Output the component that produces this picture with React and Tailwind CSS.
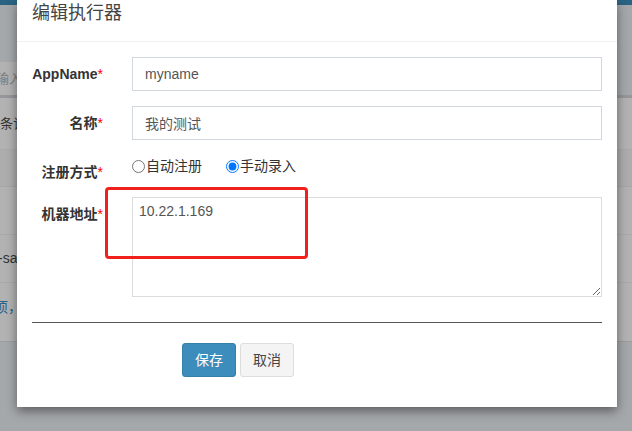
import React from 'react';

const font = { fontFamily: '"Liberation Sans", "Noto Sans CJK SC", sans-serif' };

const Req = () => <span className="text-[#ff0000] font-normal">*</span>;

const FormRow = ({ label, className = '', labelClass = 'pt-[7px]', children }) => (
    <div className={`flex ${className}`}>
        <label className={`w-[71px] shrink-0 text-right text-[14px] leading-[20px] font-bold text-[#333] whitespace-nowrap ${labelClass}`}>
            {label}
            <Req />
        </label>
        <div className="ml-[29px] flex-1">{children}</div>
    </div>
);

const Background = () => (
    <div className="flex flex-col w-full h-[431px] bg-[#a5a8ab] text-[13px]" style={font}>
        <div className="h-[5px] bg-[#2a6383]" />
        <div className="h-[57px]" />
        <div className="h-[33px] flex items-center">
            <div className="w-[220px] h-full bg-[#b2b2b2] flex items-center">
                <span className="-ml-[4px] text-[#7a7a7a]">输入</span>
            </div>
        </div>
        <div className="h-[3px] bg-[#95979a]" />
        <div className="bg-[#b2b2b2] flex flex-col">
            <div className="h-[52px] flex items-center border-b border-[#a9a9a9]">
                <span className="text-[#333]">条记</span>
            </div>
            <div className="h-[37px] border-b border-[#a6a6a6] bg-[#adadad]" />
            <div className="h-[48px] border-b border-[#a9a9a9]" />
            <div className="h-[48px] flex items-center border-b border-[#a9a9a9]">
                <span className="-ml-[2px] text-[14px] text-[#333]">-sa</span>
            </div>
            <div className="h-[59px] flex items-start pt-[14px] border-b border-[#9c9ea1]">
                <span className="-ml-[6px] text-[14px] text-[#25628a]">项，</span>
            </div>
        </div>
    </div>
);

const App = () => {
    return (
        <div className="relative w-[632px] h-[431px] overflow-hidden" style={font}>
            <Background />

            <div className="absolute left-[17px] top-0 w-[600px] bg-white shadow-[0_4px_10px_rgba(0,0,0,0.45)]">
                <div className="h-[42px] px-[15px] border-b border-[#f0f0f0]">
                    <h4 className="text-[18px] leading-[26px] font-normal text-[#444]">编辑执行器</h4>
                </div>

                <div className="px-[15px] pt-[15px] pb-[30px]">
                    <FormRow label="AppName" className="mb-[15px]">
                        <input
                            className="w-full h-[34px] border border-[#d2d6de] px-[12px] text-[14px] text-[#555] outline-none"
                            defaultValue="myname"
                        />
                    </FormRow>
                    <FormRow label="名称" className="mb-[15px]">
                        <input
                            className="w-full h-[34px] border border-[#d2d6de] px-[12px] text-[14px] text-[#555] outline-none"
                            defaultValue="我的测试"
                        />
                    </FormRow>
                    <FormRow label="注册方式" className="mb-[15px] h-[27px]">
                        <div className="flex items-center h-[20px] mt-[1px] text-[14px] text-[#333]">
                            <label className="flex items-center">
                                <input type="radio" name="type" className="m-0 w-[13px] h-[13px]" />
                                <span className="ml-px">自动注册</span>
                            </label>
                            <label className="flex items-center ml-[24px]">
                                <input type="radio" name="type" className="m-0 w-[13px] h-[13px]" defaultChecked />
                                <span className="ml-px">手动录入</span>
                            </label>
                        </div>
                    </FormRow>
                    <FormRow label="机器地址">
                        <textarea
                            className="block w-full h-[100px] border border-[#dcdcdc] px-[6px] py-[3px] text-[14px] leading-[20px] text-[#555] outline-none"
                            defaultValue="10.22.1.169"
                        />
                    </FormRow>

                    <div className="mt-[25px] h-px bg-[#555]" />

                    <div className="mt-[20px] ml-[150px] flex gap-[4px]">
                        <button className="w-[54px] h-[34px] rounded-[3px] bg-[#3c8dbc] border border-[#367fa9] text-white text-[14px]">
                            保存
                        </button>
                        <button className="w-[54px] h-[34px] rounded-[3px] bg-[#f4f4f4] border border-[#ddd] text-[#444] text-[14px]">
                            取消
                        </button>
                    </div>
                </div>
            </div>

            <div className="absolute left-[105px] top-[187px] w-[203px] h-[72px] border-[3px] border-[#f0211c] rounded-[4px]" />
        </div>
    );
};

export default App;
